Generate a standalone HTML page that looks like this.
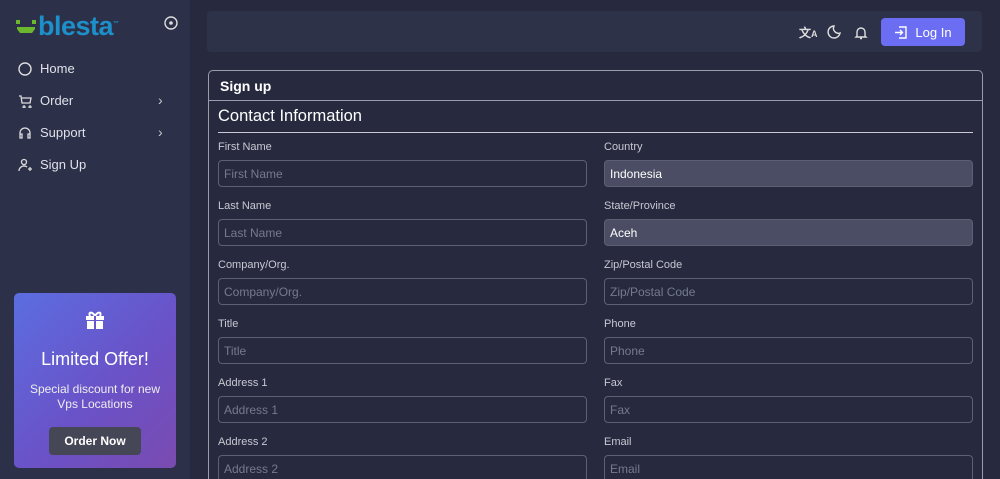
<!DOCTYPE html><html><head><style>
*{box-sizing:border-box;margin:0;padding:0}
html,body{width:1000px;height:479px;overflow:hidden}
body{background:#272a3f;font-family:"Liberation Sans",sans-serif;color:#e6e7ee;position:relative}
.sb{position:absolute;left:0;top:0;width:190px;height:479px;background:#2c3048}
.logo{position:absolute;left:38px;top:8px;font-size:27px;font-weight:bold;color:#1d8fc9;letter-spacing:-0.5px;line-height:32px}
.nav{position:absolute;left:18px;font-size:13px;color:#e0e1ea;display:flex;align-items:center}
.nav svg{margin-right:8px}
.chev{position:absolute;left:158px;font-size:14px;color:#ccc}
.promo{position:absolute;left:14px;top:293px;width:162px;height:175px;border-radius:5px;background:linear-gradient(135deg,#5b6ee0,#6a52c8 55%,#7a4bb0);text-align:center}
.promo h3{font-size:18px;font-weight:normal;margin-top:56px;color:#fff}
.promo p{font-size:12px;line-height:15px;margin-top:12px;color:#eee}
.promo .b{display:inline-block;margin-top:15px;background:#454656;color:#fff;font-size:12px;padding:7px 15px;border-radius:4px;font-weight:bold}
.top{position:absolute;left:207px;top:11px;width:775px;height:41px;background:#2e3249;border-radius:4px}
.login{position:absolute;left:881px;top:18px;width:84px;height:28px;background:#6b6ef2;border-radius:4px;color:#fff;font-size:13px;display:flex;align-items:center;justify-content:center;gap:8px}
.card{position:absolute;left:208px;top:70px;width:775px;height:420px;border:1px solid #9a9cab;border-radius:5px}
.card .hd{height:30px;border-bottom:1px solid #9a9cab;padding:7px 11px;font-weight:bold;font-size:14px;color:#fff}
.ci{position:absolute;left:9px;top:36px;width:755px;font-size:16.5px;color:#fff;border-bottom:1px solid #c9cad3;padding-bottom:6px}
.f{position:absolute;width:369px}
.f label{display:block;font-size:11px;color:#c7c8d2;height:13px;line-height:13px;margin-bottom:6px}
.f div{height:27px;border:1px solid #5d6074;border-radius:4px;font-size:12px;color:#767a8f;padding:6px 5px}
.f div.s{background:#4a4d63;color:#fff}
</style></head><body>
<div class="sb">
<svg style="position:absolute;left:16px;top:16px" width="22" height="20"><rect x="0" y="4" width="4" height="4" fill="#6bb72d"/><rect x="16" y="4" width="4" height="4" fill="#6bb72d"/><path d="M1 11h18v2l-3 4H4l-3-4z" fill="#6bb72d"/></svg>
<div class="logo">blesta<sup style="font-size:6px">™</sup></div>
<svg style="position:absolute;left:164px;top:16px" width="14" height="14"><circle cx="7" cy="7" r="6" fill="none" stroke="#ddd" stroke-width="1.4"/><circle cx="7" cy="7" r="1.8" fill="#ddd"/></svg>
<div class="nav" style="top:61px"><svg width="14" height="14"><circle cx="7" cy="7" r="6" fill="none" stroke="#ddd" stroke-width="1.4"/></svg>Home</div>
<div class="nav" style="top:93px"><svg width="14" height="14"><path d="M1 2h2l1 7h8l1-5H4M5 13a1 1 0 100-.1M11 13a1 1 0 100-.1" fill="none" stroke="#ddd" stroke-width="1.3"/></svg>Order</div><div class="chev" style="top:92px">›</div>
<div class="nav" style="top:125px"><svg width="14" height="14"><path d="M2 9V7a5 5 0 0110 0v2M2 8h2v4H2zM10 8h2v4h-2z" fill="none" stroke="#ddd" stroke-width="1.3"/></svg>Support</div><div class="chev" style="top:124px">›</div>
<div class="nav" style="top:157px"><svg width="14" height="14"><circle cx="6" cy="4" r="2.5" fill="none" stroke="#ddd" stroke-width="1.3"/><path d="M1 13a5 5 0 018 -4M10 11h4M12 9v4" fill="none" stroke="#ddd" stroke-width="1.3"/></svg>Sign Up</div>
<div class="promo"><svg style="position:absolute;left:70px;top:17px" width="22" height="20"><path d="M2 6h18v4H2zM3 11h16v8H3z" fill="#fff"/><path d="M11 6C8 1 4 2 6 6M11 6c3-5 7-4 5 0" fill="none" stroke="#fff" stroke-width="2"/><path d="M10 6h2v13h-2z" fill="#6a55cb"/></svg>
<h3>Limited Offer!</h3><p>Special discount for new<br>Vps Locations</p><span class="b">Order Now</span></div>
</div>
<div class="top"></div>
<div style="position:absolute;left:799px;top:24px;font-size:12px;color:#ddd;font-weight:bold">文<span style="font-size:9px">A</span></div>
<svg style="position:absolute;left:827px;top:25px" width="14" height="14"><path d="M7 1a6 6 0 106 7A5 5 0 017 1z" fill="none" stroke="#ddd" stroke-width="1.4"/></svg>
<svg style="position:absolute;left:854px;top:25px" width="14" height="15"><path d="M3 11V7a4 4 0 018 0v4l1 1H2zM6 13.5h2" fill="none" stroke="#ddd" stroke-width="1.4"/></svg>
<div class="login"><svg width="13" height="13"><path d="M5 1h7v11H5M1 6.5h7M6 4l2.5 2.5L6 9" fill="none" stroke="#fff" stroke-width="1.4"/></svg>Log In</div>
<div class="card"><div class="hd">Sign up</div><div class="ci">Contact Information</div>
<div class="f" style="left:9px;top:70px"><label>First Name</label><div>First Name</div></div>
<div class="f" style="left:395px;top:70px"><label>Country</label><div class="s">Indonesia</div></div>
<div class="f" style="left:9px;top:129px"><label>Last Name</label><div>Last Name</div></div>
<div class="f" style="left:395px;top:129px"><label>State/Province</label><div class="s">Aceh</div></div>
<div class="f" style="left:9px;top:188px"><label>Company/Org.</label><div>Company/Org.</div></div>
<div class="f" style="left:395px;top:188px"><label>Zip/Postal Code</label><div>Zip/Postal Code</div></div>
<div class="f" style="left:9px;top:247px"><label>Title</label><div>Title</div></div>
<div class="f" style="left:395px;top:247px"><label>Phone</label><div>Phone</div></div>
<div class="f" style="left:9px;top:306px"><label>Address 1</label><div>Address 1</div></div>
<div class="f" style="left:395px;top:306px"><label>Fax</label><div>Fax</div></div>
<div class="f" style="left:9px;top:365px"><label>Address 2</label><div>Address 2</div></div>
<div class="f" style="left:395px;top:365px"><label>Email</label><div>Email</div></div>
</div>
</body></html>
